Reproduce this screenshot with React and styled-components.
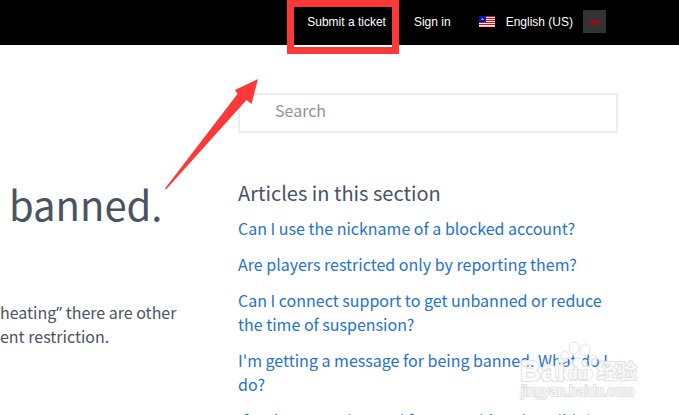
import styled, { createGlobalStyle } from "styled-components";

const GlobalStyle = createGlobalStyle`
  * {
    box-sizing: border-box;
  }

  body {
    margin: 0;
    background-color: #fff;
    color: #4a5364;
    font-family: "Noto Sans CJK SC", "Source Sans Pro", sans-serif;
    font-size: 16px;
    line-height: 24px;
    overflow: hidden;
  }
`;

const TopBar = styled.header`
  display: flex;
  justify-content: flex-end;
  align-items: center;
  height: 45px;
  padding: 0 73px 2px 0;
  background-color: #000;
  font-family: "Liberation Sans", Arial, sans-serif;
  font-size: 12px;
`;

const TopLink = styled.a`
  position: relative;
  margin-right: 28px;
  color: #fff;
  text-decoration: none;
`;

const Highlight = styled.span`
  position: absolute;
  inset: -10px -13px -20px -20px;
  border: 7px solid #fc3838;
  pointer-events: none;
`;

const Language = styled.button`
  display: flex;
  align-items: center;
  padding: 0;
  border: 0;
  background: none;
  color: #fff;
  font: inherit;
`;

const LanguageName = styled.span`
  margin: 0 10px 0 11px;
`;

const Caret = styled.span`
  display: flex;
  align-items: center;
  justify-content: center;
  width: 23px;
  height: 23px;
  padding-top: 4px;
  background-color: #333;
`;

const Page = styled.main`
  display: flex;
  align-items: flex-start;
  position: relative;
  padding: 48px 61px 0 0;
`;

const Article = styled.article`
  flex: 1;
  padding-top: 81px;
`;

const Title = styled.h1`
  margin: 0 0 66px 9px;
  font-size: 40px;
  font-weight: 400;
  line-height: 60px;
`;

const Text = styled.p`
  margin: 0;
`;

const Quote = styled.span`
  font-family: "Noto Sans", sans-serif;
  line-height: 1;
`;

const Aside = styled.aside`
  width: 380px;
`;

const SearchInput = styled.input`
  display: block;
  width: 100%;
  height: 40px;
  padding: 0 35px 6px;
  border: 2px solid #ededed;
  background-color: #fff;
  color: #4a5364;
  font: inherit;

  &::placeholder {
    color: #949494;
    opacity: 1;
  }
`;

const SectionTitle = styled.h2`
  margin: 45px 0 8px;
  font-size: 20px;
  font-weight: 400;
  line-height: 30px;
`;

const ArticleList = styled.ul`
  display: flex;
  flex-direction: column;
  gap: 12px;
  margin: 0;
  padding: 0;
  list-style: none;
`;

const ArticleLink = styled.a`
  color: #2573c9;
  text-decoration: none;
`;

const Arrow = styled.svg`
  position: absolute;
  top: 33px;
  left: 164px;
`;

const Watermark = styled.svg`
  position: absolute;
  top: 293px;
  right: 36px;
  pointer-events: none;

  text {
    paint-order: stroke;
  }
`;

const articles = [
  "Can I use the nickname of a blocked account?",
  "Are players restricted only by reporting them?",
  "Can I connect support to get unbanned or reduce the time of suspension?",
  "I'm getting a message for being banned. What do I do?",
  "If a player was banned for something they didn't do",
];

function Flag() {
  return (
    <svg width="16" height="11" viewBox="0 0 16 11" aria-hidden="true">
      <rect width="16" height="11" fill="#fff" />
      <path
        d="M0 .5h16M0 2.5h16M0 4.5h16M0 6.5h16M0 8.5h16"
        stroke="#f00000"
      />
      <path d="M0 10.5h16" stroke="#f4b0b0" />
      <rect width="7" height="6" fill="#1414a8" />
      <path d="M2 3.5h3M3 2.5h1" stroke="#8589d8" />
    </svg>
  );
}

function BaiduMark() {
  return (
    <Watermark width="124" height="66" viewBox="0 0 124 66" aria-hidden="true">
      <g
        fill="#fff"
        fillOpacity="0.8"
        stroke="#e2e2e2"
        strokeWidth="2"
        strokeLinejoin="round"
        fontFamily="Liberation Sans, sans-serif"
      >
        <text x="1" y="43" fontSize="29" fontWeight="700">
          Bai
        </text>
        <g strokeWidth="1">
          <ellipse cx="46" cy="18" rx="4" ry="5" />
          <ellipse cx="55" cy="10" rx="5" ry="6" />
          <ellipse cx="66" cy="12" rx="5" ry="6" />
          <ellipse cx="74" cy="22" rx="4" ry="5" />
          <path d="M59 20c6 0 7 5 10 8c4 4 6 7 4 11c-3 6-9 3-14 3s-12 3-14-3c-2-5 2-8 5-11c3-4 4-8 9-8z" />
        </g>
        <text x="49" y="41" fontSize="16" fontWeight="700">
          du
        </text>
        <text
          x="78"
          y="41"
          fontSize="20"
          fontWeight="700"
          fontFamily="Noto Sans CJK SC, sans-serif"
        >
          经验
        </text>
        <text x="2" y="58" fontSize="14">
          jingyan.baidu.com
        </text>
      </g>
    </Watermark>
  );
}

function App() {
  return (
    <>
      <GlobalStyle />
      <TopBar>
        <TopLink href="#ticket">
          Submit a ticket
          <Highlight />
        </TopLink>
        <TopLink href="#signin">Sign in</TopLink>
        <Language type="button">
          <Flag />
          <LanguageName>English (US)</LanguageName>
          <Caret>
            <svg width="13" height="7" viewBox="0 0 13 7" aria-hidden="true">
              <path d="M0 0h13l-6.500 7z" fill="#8c1515" />
            </svg>
          </Caret>
        </Language>
      </TopBar>

      <Page>
        <Article>
          <Title>banned.</Title>
          <Text>
            heating<Quote>”</Quote> there are other
            <br />
            ent restriction.
          </Text>
        </Article>

        <Aside>
          <SearchInput type="search" placeholder="Search" aria-label="Search" />
          <SectionTitle>Articles in this section</SectionTitle>
          <ArticleList>
            {articles.map((article) => (
              <li key={article}>
                <ArticleLink href="#article">{article}</ArticleLink>
              </li>
            ))}
          </ArticleList>
        </Aside>

        <Arrow width="96" height="114" viewBox="0 0 96 114" aria-hidden="true">
          <path
            d="M94 1L87.500 26L82.500 22L2 111.500L1 110.500L73.500 16L71 12z"
            fill="#fc3838"
          />
        </Arrow>
        <BaiduMark />
      </Page>
    </>
  );
}

export default App;
